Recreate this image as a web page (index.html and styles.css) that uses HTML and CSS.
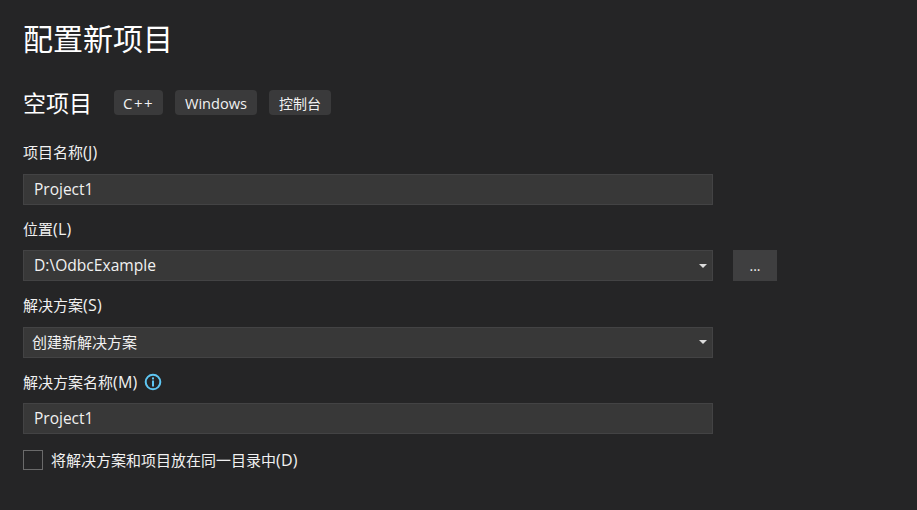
FILE: index.html
```html
<!DOCTYPE html>
<html lang="zh-CN">
<head>
<meta charset="utf-8">
<title>配置新项目</title>
<link rel="stylesheet" href="styles.css">
</head>
<body>
<main class="page">
  <h1 class="title">配置新项目</h1>
  <div class="template">
    <h2 class="template-name">空项目</h2>
    <ul class="tags">
      <li class="tag tag-wide">C++</li>
      <li class="tag tag-latin">Windows</li>
      <li class="tag">控制台</li>
    </ul>
  </div>
  <div class="field">
    <label class="label"><span>项目名称<span class="key">(J)</span></span></label>
    <input class="control text-input" type="text" value="Project1">
  </div>
  <div class="field">
    <label class="label"><span>位置<span class="key">(L)</span></span></label>
    <div class="row">
      <div class="control select latin"><span>D:\OdbcExample</span><i class="caret"></i></div>
      <button class="browse" type="button">...</button>
    </div>
  </div>
  <div class="field">
    <label class="label"><span>解决方案<span class="key">(S)</span></span></label>
    <div class="control select"><span>创建新解决方案</span><i class="caret"></i></div>
  </div>
  <div class="field">
    <label class="label"><span>解决方案名称<span class="key">(M)</span></span>
      <svg class="info" viewBox="0 0 18 18" width="18" height="18" aria-hidden="true">
        <circle cx="9" cy="9" r="7.3" fill="none" stroke="#5ec6f2" stroke-width="2"/>
        <rect x="8" y="4.4" width="2" height="2" fill="#5ec6f2"/>
        <rect x="8" y="7.5" width="2" height="6" fill="#5ec6f2"/>
      </svg>
    </label>
    <input class="control text-input" type="text" value="Project1">
  </div>
  <label class="check">
    <span class="box"></span>
    <span>将解决方案和项目放在同一目录中<span class="key">(D)</span></span>
  </label>
</main>
</body>
</html>
```

FILE: styles.css
```css
* {
  box-sizing: border-box;
}

html,
body {
  margin: 0;
  height: 100%;
}

body {
  background: #252526;
  color: #f1f1f1;
  font-family: "Open Sans", "Noto Sans CJK SC", sans-serif;
  font-size: 15px;
  overflow: hidden;
}

.page {
  padding: 17px 0 0 23px;
}

.title {
  margin: 0;
  font-size: 30px;
  font-weight: 400;
  line-height: 44px;
  color: #fff;
}

.template {
  display: flex;
  align-items: center;
  gap: 22px;
  margin-top: 29px;
  height: 25px;
}

.template-name {
  margin: 0 0 2px;
  font-size: 23px;
  font-weight: 400;
  color: #fff;
}

.tags {
  display: flex;
  gap: 12px;
  margin: 0;
  padding: 0;
  list-style: none;
}

.tag {
  display: flex;
  align-items: center;
  justify-content: center;
  height: 25px;
  padding: 0 10px;
  background: #3a3a3b;
  border-radius: 4px;
  font-size: 14px;
}

.tag-latin {
  width: 82px;
  padding: 0;
  font-size: 14.6px;
}

.tag-wide {
  width: 49px;
  padding: 0;
  font-size: 15px;
  letter-spacing: 1.5px;
}

.field {
  margin-top: 26.2px;
}

.field + .field {
  margin-top: 13px;
}

.label {
  display: flex;
  align-items: center;
  height: 23.5px;
  margin-bottom: 9px;
  gap: 7px;
  line-height: 22px;
  padding-bottom: 1.4px;
}

.key {
  font-size: 16px;
  letter-spacing: 0.2px;
}

.row {
  display: flex;
  gap: 20px;
}

.control {
  display: flex;
  align-items: center;
  width: 690px;
  height: 31px;
  background: #383838;
  border: 1px solid #434344;
  color: #f1f1f1;
  font: inherit;
}

.text-input {
  padding: 0 10px 1px;
  outline: none;
  font-size: 15.5px;
}

.select {
  justify-content: space-between;
  padding: 0 5px 1px 8px;
}

.latin {
  padding-left: 10px;
  font-size: 15.6px;
}

.caret {
  width: 0;
  height: 0;
  margin-top: 1px;
  border-left: 4px solid transparent;
  border-right: 4px solid transparent;
  border-top: 4px solid #dcdcdc;
}

.browse {
  width: 44px;
  height: 31px;
  padding: 0;
  border: 0;
  background: #3f3f40;
  color: #f1f1f1;
  font: inherit;
  font-size: 14px;
}

.check {
  display: flex;
  align-items: center;
  gap: 8px;
  margin-top: 15px;
}

.box {
  width: 20px;
  height: 20px;
  border: 1px solid #6a6a6a;
}
```
